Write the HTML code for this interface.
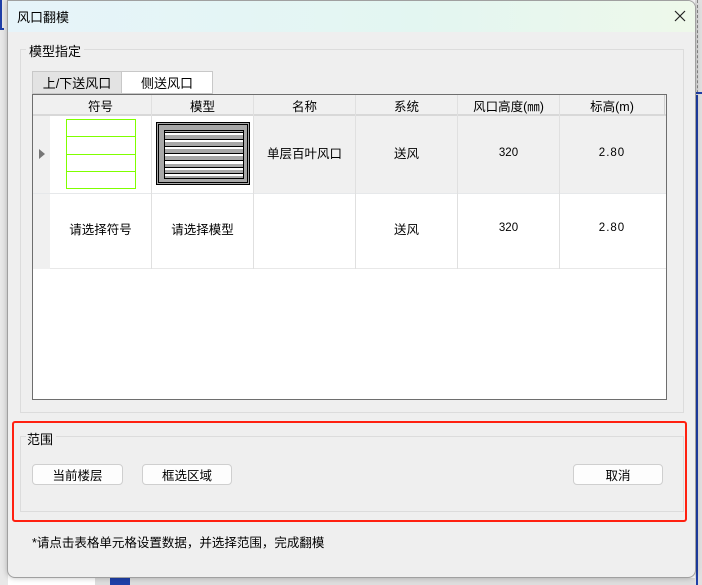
<!DOCTYPE html>
<html><head><meta charset="utf-8"><style>
*{margin:0;padding:0;box-sizing:border-box}
body{width:702px;height:585px;position:relative;overflow:hidden;background:#fff;font-family:"Liberation Sans","Noto Sans CJK SC",sans-serif;font-size:13px;color:#000}
.a{position:absolute}
.dlg{left:7px;top:0;width:689px;height:578px;background:#efefef;border:1px solid #a0a0a0;border-radius:0 8px 8px 8px;box-shadow:0 0 6px rgba(0,0,0,.25);overflow:hidden}
.title{left:0;top:0;width:100%;height:31px;background:linear-gradient(90deg,#e6f4fa,#e3f6f1 60%,#eef8ea)}
.cell{position:absolute;display:flex;align-items:center;justify-content:center;font-size:12.5px}
.btn{position:absolute;height:21px;background:#fdfdfd;border:1px solid #cfcfcf;border-radius:4px;display:flex;align-items:center;justify-content:center;font-size:12.5px}
</style></head><body>
<div class="a" style="left:0;top:0;width:8px;height:585px;background:#e8e8e8"></div>
<div class="a" style="left:0;top:0;width:4px;height:30px;border-left:2px solid #1f3fa8;border-bottom:2px solid #1f3fa8"></div>
<div class="a" style="left:695px;top:0;width:7px;height:585px;background:#e0e0e0"></div>
<div class="a" style="left:697px;top:0;width:2px;height:585px;border-left:1px dashed #888"></div>
<div class="a" style="left:695px;top:92px;width:7px;height:2px;background:#1f3fa8"></div>
<div class="a" style="left:696px;top:95px;width:2px;height:490px;background:#1f3fa8"></div>
<div class="a" style="left:95px;top:578px;width:600px;height:7px;background:#ddd"></div>
<div class="a" style="left:110px;top:578px;width:20px;height:7px;background:#1f3fa8"></div>
<div class="a dlg">
 <div class="a title"></div>
 <div class="a" style="left:9px;top:6px;font-size:13px">风口翻模</div>
 <svg class="a" style="left:666px;top:9px" width="12" height="12"><path d="M1 1L11 11M11 1L1 11" stroke="#222" stroke-width="1.2"/></svg>
 <div class="a" style="left:12px;top:48px;width:664px;height:364px;border:1px solid #dcdcdc"></div>
 <div class="a" style="left:18px;top:40px;background:#efefef;padding:0 3px">模型指定</div>
 <div class="a" style="left:24px;top:70px;width:90px;height:23px;background:#e3e3e3;border:1px solid #c8c8c8;display:flex;align-items:center;justify-content:center">上/下送风口</div>
 <div class="a" style="left:114px;top:70px;width:91px;height:23px;background:#fff;border:1px solid #c8c8c8;border-left:none;display:flex;align-items:center;justify-content:center">侧送风口</div>
 <div class="a" style="left:24px;top:93px;width:635px;height:306px;background:#fff;border:1px solid #6e6e6e"></div>
 <div class="a" style="left:25px;top:94px;width:633px;height:21px;background:#f0f0f0;border-bottom:2px solid #d8d8d8"></div>
 <div class="a" style="left:25px;top:115px;width:17px;height:153px;background:#f0f0f0"></div>
 <div class="a" style="left:246px;top:115px;width:412px;height:77px;background:#f0f0f0"></div>
 <div class="a" style="left:25px;top:192px;width:633px;height:1px;background:#e6e8ea"></div>
 <div class="a" style="left:42px;top:267px;width:616px;height:1px;background:#e8e8e8"></div>
 <div class="a" style="left:31px;top:148px;width:0;height:0;border-left:6px solid #777;border-top:5px solid transparent;border-bottom:5px solid transparent"></div>
 <div class="a" style="left:143px;top:94px;width:1px;height:174px;background:#e0e0e0"></div>
 <div class="a" style="left:245px;top:94px;width:1px;height:174px;background:#e0e0e0"></div>
 <div class="a" style="left:347px;top:94px;width:1px;height:174px;background:#e0e0e0"></div>
 <div class="a" style="left:449px;top:94px;width:1px;height:174px;background:#e0e0e0"></div>
 <div class="a" style="left:551px;top:94px;width:1px;height:174px;background:#e0e0e0"></div>
 <div class="a" style="left:656px;top:94px;width:1px;height:20px;background:#d0d0d0"></div>
 <div class="cell" style="left:42px;top:94px;width:101px;height:20px">符号</div>
 <div class="cell" style="left:144px;top:94px;width:101px;height:20px">模型</div>
 <div class="cell" style="left:246px;top:94px;width:101px;height:20px">名称</div>
 <div class="cell" style="left:348px;top:94px;width:101px;height:20px">系统</div>
 <div class="cell" style="left:450px;top:94px;width:101px;height:20px">风口高度(㎜)</div>
 <div class="cell" style="left:552px;top:94px;width:104px;height:20px">标高(m)</div>
 <div class="a" style="left:58px;top:118px;width:70px;height:70px;border:1px solid #7fff00"></div>
 <div class="a" style="left:58px;top:135px;width:70px;height:1px;background:#7fff00"></div>
 <div class="a" style="left:58px;top:153px;width:70px;height:1px;background:#7fff00"></div>
 <div class="a" style="left:58px;top:170px;width:70px;height:1px;background:#7fff00"></div>
 <svg class="a" style="left:148px;top:121px" width="95" height="64">
  <rect x="0.5" y="0.5" width="93" height="62" fill="#a8a8a8" stroke="#000"/>
  <rect x="2.5" y="2.5" width="89" height="58" fill="none" stroke="#000"/>
  <rect x="8.5" y="8.5" width="79" height="48" fill="#a8a8a8" stroke="#000"/>
  <g fill="#fff">
   <rect x="9" y="11" width="78" height="2"/><rect x="9" y="18" width="78" height="2"/>
   <rect x="9" y="25" width="78" height="2"/><rect x="9" y="32" width="78" height="2"/>
   <rect x="9" y="39" width="78" height="3"/><rect x="9" y="46" width="78" height="2"/>
   <rect x="9" y="52" width="78" height="2"/>
  </g>
  <g fill="#000">
   <rect x="9" y="10" width="78" height="1"/><rect x="9" y="17" width="78" height="1"/>
   <rect x="9" y="24" width="78" height="1"/><rect x="9" y="31" width="78" height="1"/>
   <rect x="9" y="38" width="78" height="1"/><rect x="9" y="45" width="78" height="1"/>
   <rect x="9" y="51" width="78" height="1"/>
  </g>
 </svg>
 <div class="cell" style="left:246px;top:113px;width:101px;height:77px">单层百叶风口</div>
 <div class="cell" style="left:348px;top:113px;width:101px;height:77px">送风</div>
 <div class="cell" style="left:450px;top:113px;width:101px;height:77px;font-size:11.5px">320</div>
 <div class="cell" style="left:552px;top:113px;width:104px;height:77px;font-size:11.5px;letter-spacing:1px">2.80</div>
 <div class="cell" style="left:42px;top:190px;width:101px;height:74px">请选择符号</div>
 <div class="cell" style="left:144px;top:190px;width:101px;height:74px">请选择模型</div>
 <div class="cell" style="left:348px;top:190px;width:101px;height:74px">送风</div>
 <div class="cell" style="left:450px;top:190px;width:101px;height:74px;font-size:11.5px">320</div>
 <div class="cell" style="left:552px;top:190px;width:104px;height:74px;font-size:11.5px;letter-spacing:1px">2.80</div>
 <div class="a" style="left:12px;top:435px;width:664px;height:76px;border:1px solid #dcdcdc"></div>
 <div class="a" style="left:18px;top:428px;background:#efefef;padding:0 3px 0 1px">范围</div>
 <div class="btn" style="left:24px;top:463px;width:91px">当前楼层</div>
 <div class="btn" style="left:134px;top:463px;width:90px">框选区域</div>
 <div class="btn" style="left:565px;top:463px;width:90px">取消</div>
 <div class="a" style="left:4px;top:420px;width:675px;height:101px;border:2px solid #ff2010;border-radius:3px"></div>
 <div class="a" style="left:24px;top:531px;font-size:12.5px">*请点击表格单元格设置数据，并选择范围，完成翻模</div>
</div>
</body></html>
